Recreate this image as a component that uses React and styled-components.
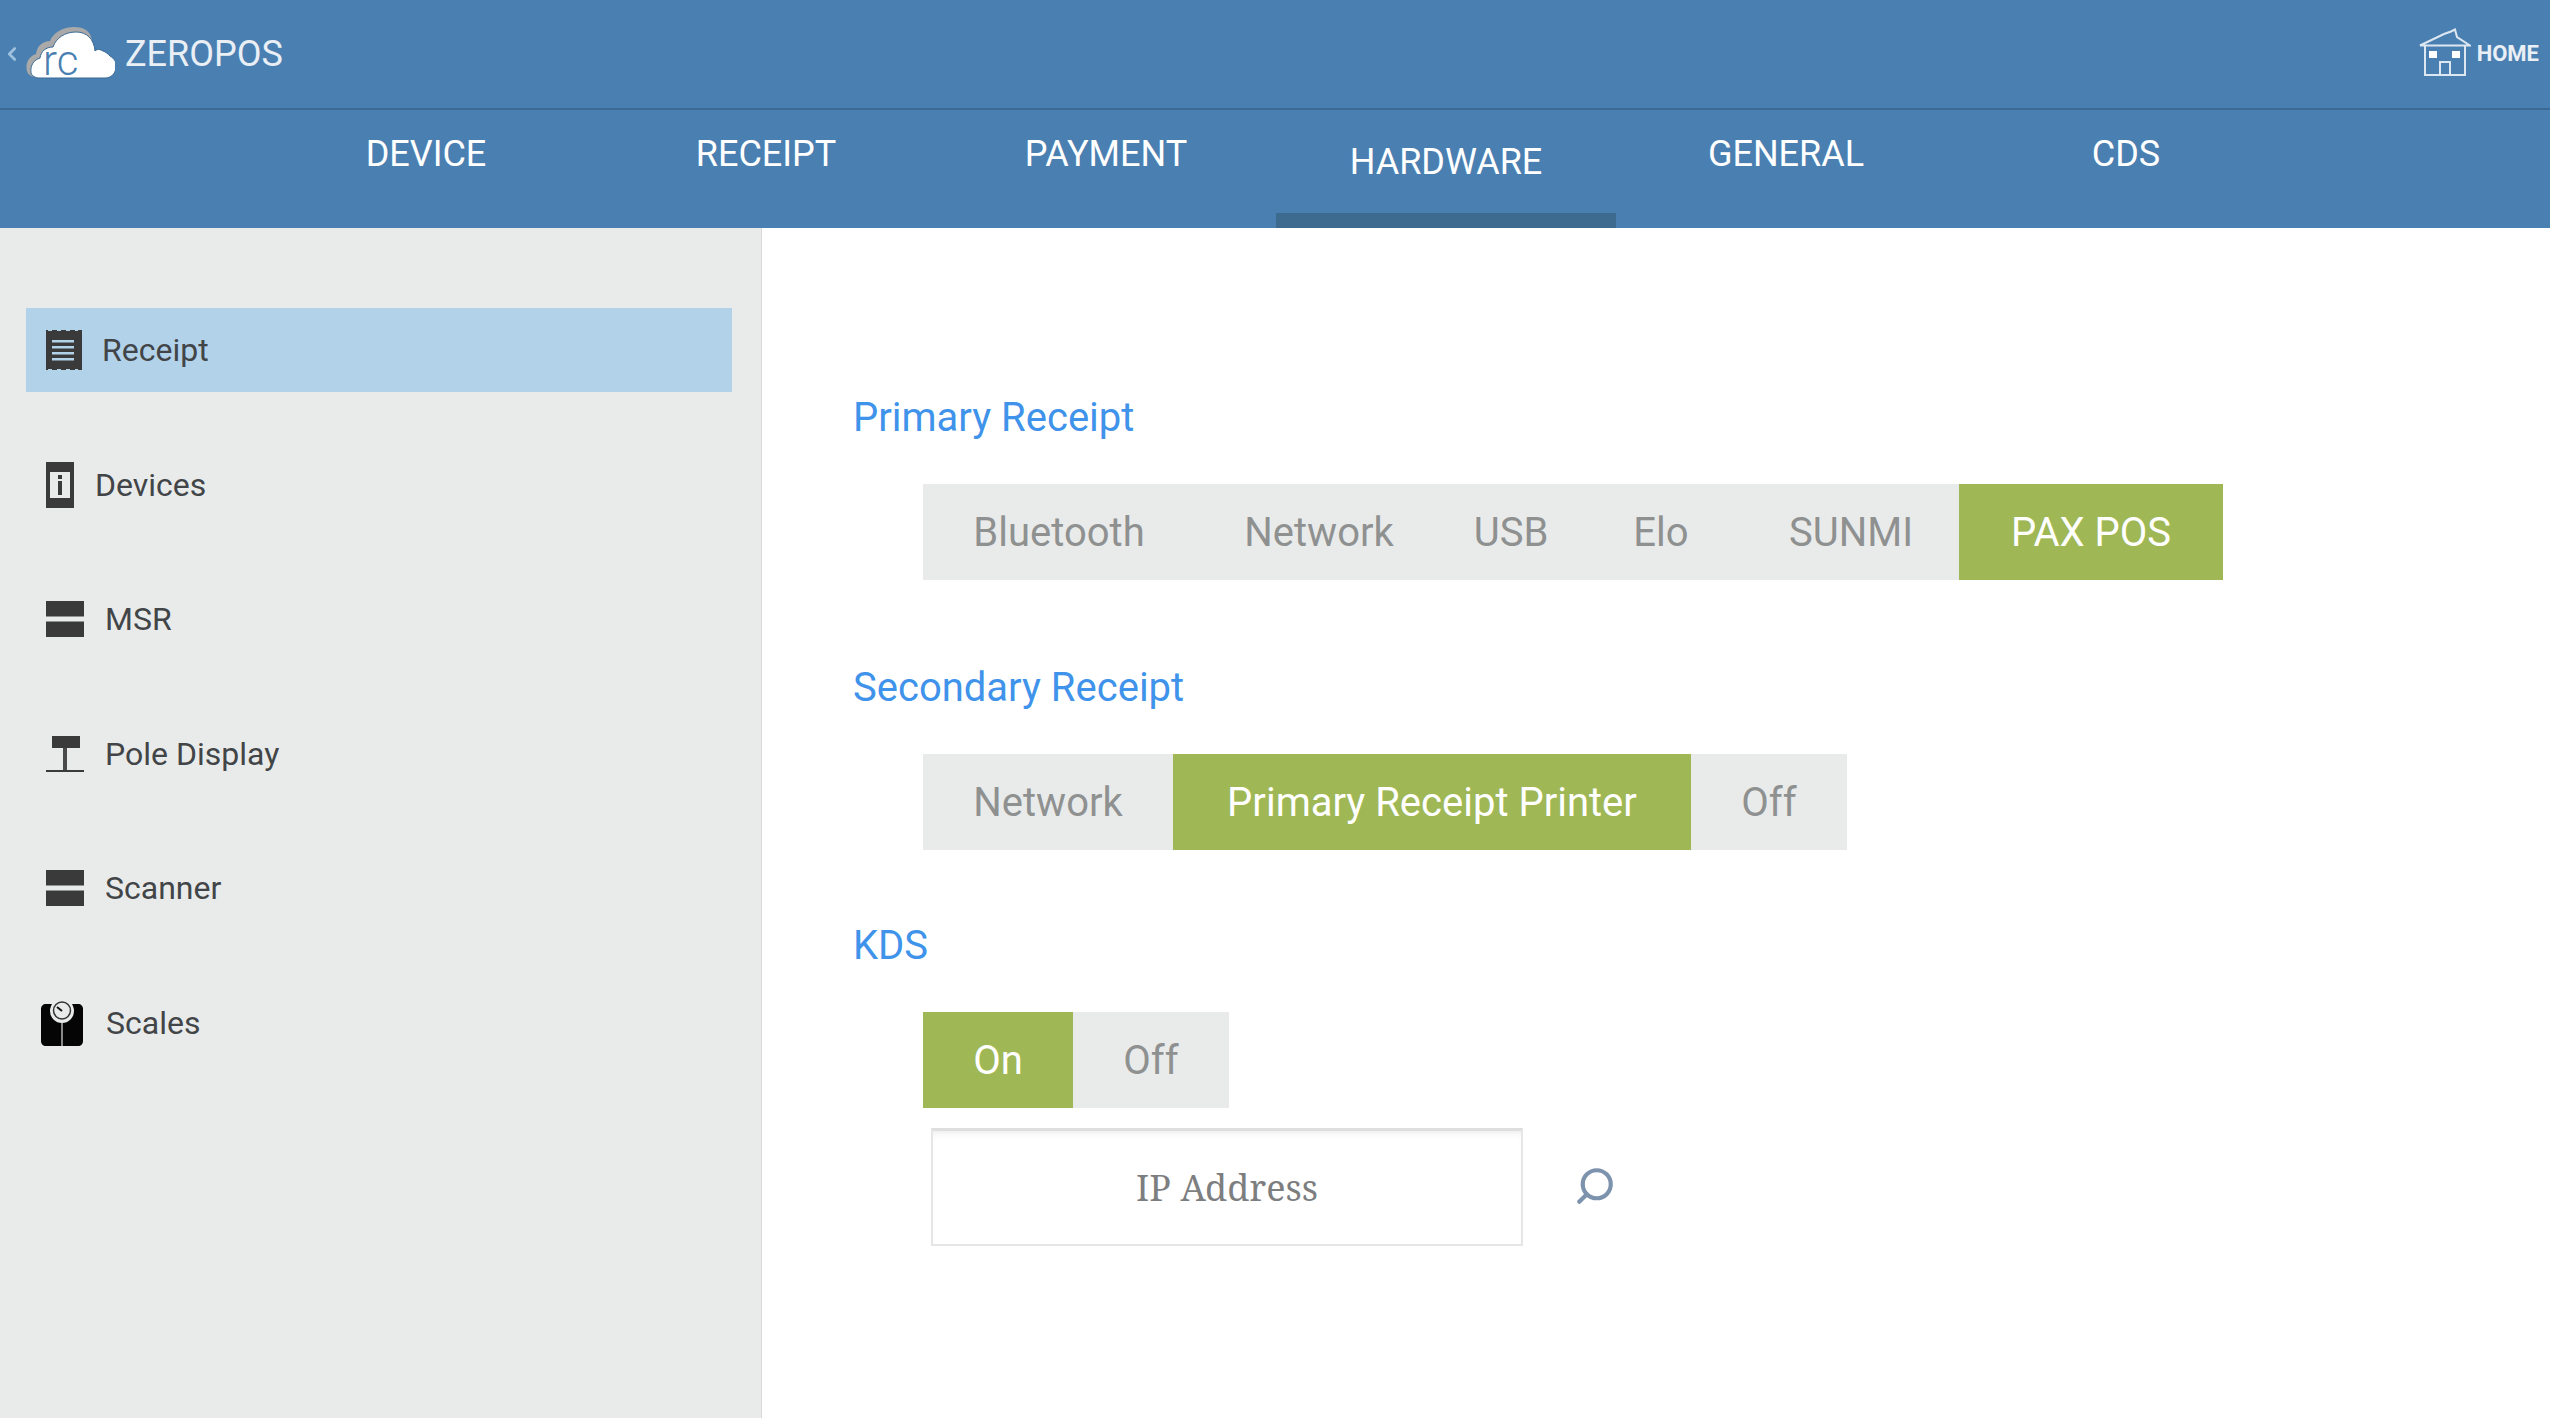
import React from 'react';
import styled, { createGlobalStyle } from 'styled-components';
import { Search, ChevronLeft } from 'lucide-react';

const GlobalStyle = createGlobalStyle`
  html, body {
    margin: 0;
    padding: 0;
    background: #fff;
    font-family: Roboto, "Liberation Sans", sans-serif;
  }
`;

const Page = styled.div`
  width: 2550px;
  height: 1418px;
  display: flex;
  flex-direction: column;
  overflow: hidden;
`;

const TopBar = styled.header`
  height: 108px;
  flex: none;
  display: flex;
  align-items: center;
  justify-content: space-between;
  background: #4a7fb1;
  border-bottom: 2px solid #3a6a95;
  box-sizing: content-box;
`;

const Brand = styled.div`
  display: flex;
  align-items: center;
  color: #e9eff5;
  font-size: 36px;
  padding-top: 0;
`;

const BackIcon = styled(ChevronLeft)`
  width: 22px;
  height: 34px;
  color: #9dc1de;
  margin-left: 1px;
  margin-right: 0;
`;

const BrandName = styled.span`
  margin-left: 10px;
`;

const HomeLink = styled.div`
  display: flex;
  align-items: center;
  gap: 6px;
  color: #e9eff5;
  font-size: 22px;
  font-weight: 700;
  padding-right: 11px;
  margin-top: -2px;
`;

const TabBar = styled.nav`
  height: 118px;
  flex: none;
  display: flex;
  padding-left: 256px;
  background: #4a7fb1;
`;

const Tab = styled.div`
  width: 340px;
  height: 118px;
  box-sizing: border-box;
  display: flex;
  align-items: center;
  justify-content: center;
  padding-top: 0;
  color: #fff;
  font-size: 36px;
  border-bottom: 15px solid ${p => (p.$active ? '#3d6b90' : 'transparent')};
  padding-bottom: ${p => (p.$active ? '0' : '15px')};
`;

const Body = styled.div`
  flex: 1;
  display: flex;
  min-height: 0;
`;

const Sidebar = styled.aside`
  width: 762px;
  flex: none;
  box-sizing: border-box;
  padding: 80px 0 0 26px;
  background: #e9ebeb;
  border-right: 1px solid #d8dada;
  display: flex;
  flex-direction: column;
  gap: 50.6px;
`;

const SideItem = styled.div`
  width: 706px;
  height: 84px;
  display: flex;
  align-items: center;
  color: #424547;
  font-size: 32px;
  background: ${p => (p.$active ? '#b2d2ea' : 'transparent')};
`;

const SideIcon = styled.svg`
  flex: none;
  display: block;
  margin-left: ${p => p.$left}px;
  margin-right: ${p => p.$right}px;
`;

const Main = styled.main`
  flex: 1;
  box-sizing: border-box;
  padding: 162px 0 0 91px;
`;

const SectionTitle = styled.h2`
  margin: 0;
  height: 56px;
  line-height: 56px;
  color: #3f93ea;
  font-size: 40px;
  font-weight: 400;
`;

const Segments = styled.div`
  display: flex;
  width: fit-content;
  margin: ${p => p.$top}px 0 ${p => p.$bottom}px 70px;
  background: #e9ebeb;
`;

const Segment = styled.div`
  height: 96px;
  display: flex;
  align-items: center;
  justify-content: center;
  box-sizing: border-box;
  width: ${p => p.$width}px;
  font-size: 40px;
  color: ${p => (p.$on ? '#fff' : '#8f9191')};
  background: ${p => (p.$on ? '#9fb855' : 'transparent')};
`;

const AddressRow = styled.div`
  display: flex;
  align-items: center;
  margin: 20px 0 0 78px;
`;

const AddressInput = styled.div`
  width: 592px;
  height: 118px;
  box-sizing: border-box;
  display: flex;
  align-items: center;
  justify-content: center;
  padding-top: 0;
  border: 2px solid #e6e6e6;
  border-top: 3px solid #dedede;
  box-shadow: inset 0 6px 8px -6px rgba(0, 0, 0, 0.12);
  color: #7c7e80;
  font-family: "Noto Serif", "DejaVu Serif", "Liberation Serif", serif;
  font-size: 36px;
`;

const SearchIcon = styled(Search)`
  width: 42px;
  height: 42px;
  margin-left: 51px;
  margin-top: -3px;
  color: #7d92ad;
  transform: scaleX(-1);
`;

const CloudLogo = () => (
  <svg width="92" height="62" viewBox="0 0 92 62">
    <path d="M4 48c-2-8 2-15 9-17 1-8 7-13 14-13 3-8 13-14 24-14 10 0 17 4 18 14l-8 36H14C9 54 5 52 4 48z" fill="#a9a9a9" />
    <path d="M8 50c-1-8 3-13 9-15 1-7 6-11 13-11 3-9 12-15 23-15 11 0 18 7 19 19 2-2 5-2 8 0 3 1 5 3 7 5 5 3 7 7 6 12-1 6-5 10-11 10H17c-5 0-8-2-9-5z" fill="#fff" stroke="#3a6a95" strokeWidth="1" />
    <text x="20" y="52" fontFamily="Roboto, sans-serif" fontSize="42" fontWeight="300" fill="#4a7fb1">rc</text>
  </svg>
);

const HomeIcon = () => (
  <svg width="52" height="50" viewBox="0 0 52 50" fill="none" stroke="#dce7f1" strokeWidth="2">
    <path d="M1 17.5 L25 6 L32 3.5 L36 1.5 L38 9 L51 17.5 Z" />
    <path d="M6 18 V47 H46 V18" />
    <path d="M21 47 V34 H31 V47" />
    <rect x="10" y="23" width="8" height="7" fill="#fff" stroke="none" />
    <rect x="33" y="23" width="8" height="7" fill="#fff" stroke="none" />
  </svg>
);

const ReceiptIcon = () => (
  <SideIcon $left={20} $right={20} width="36" height="40" viewBox="0 0 36 40">
    <path d="M0 0h2v1h4V0h5v1h4V0h5v1h4V0h5v1h3V0h4v40h-4v-1h-3v1h-5v-1h-4v1h-5v-1h-4v1H6v-1H2v1H0z" fill="#3a3a3a" />
    <path d="M6 10h22v2.5H6zM6 16h22v2.5H6zM6 22h22v2.5H6zM6 28h22v2.5H6z" fill="#b2d2ea" />
  </SideIcon>
);

const DeviceIcon = () => (
  <SideIcon $left={20} $right={21} width="28" height="46" viewBox="0 0 28 46">
    <rect width="28" height="46" fill="#3a3a3a" />
    <rect x="4" y="10" width="20" height="26" fill="#e9ebeb" />
    <rect x="12" y="13" width="4" height="4" fill="#3a3a3a" />
    <rect x="12" y="19" width="4" height="14" fill="#3a3a3a" />
  </SideIcon>
);

const BarsIcon = () => (
  <SideIcon $left={20} $right={21} width="38" height="36" viewBox="0 0 38 36">
    <rect width="38" height="15.5" fill="#3a3a3a" />
    <rect y="20.5" width="38" height="15.5" fill="#3a3a3a" />
  </SideIcon>
);

const PoleIcon = () => (
  <SideIcon $left={20} $right={21} width="38" height="36" viewBox="0 0 38 36">
    <rect x="6" width="28" height="12" fill="#3a3a3a" />
    <rect x="17" y="12" width="4" height="22" fill="#4a4a4a" />
    <rect y="34" width="38" height="2" fill="#3a3a3a" />
  </SideIcon>
);

const ScaleIcon = () => (
  <SideIcon $left={14} $right={22} width="44" height="48" viewBox="0 0 44 48">
    <path d="M6 5h32c3 0 5 2 5 5v32c0 3-2 5-5 5H6c-3 0-5-2-5-5V10c0-3 2-5 5-5z" fill="#050505" />
    <circle cx="22" cy="12" r="12" fill="#e9ebeb" />
    <circle cx="22" cy="11.5" r="8.5" fill="none" stroke="#333" strokeWidth="1.5" />
    <path d="M17 8l5 4" stroke="#111" strokeWidth="2" />
    <rect x="21" y="24" width="2" height="23" fill="#888" />
  </SideIcon>
);

const tabs = ['DEVICE', 'RECEIPT', 'PAYMENT', 'HARDWARE', 'GENERAL', 'CDS'];

const sideItems = [
  { label: 'Receipt', icon: <ReceiptIcon />, active: true },
  { label: 'Devices', icon: <DeviceIcon /> },
  { label: 'MSR', icon: <BarsIcon /> },
  { label: 'Pole Display', icon: <PoleIcon /> },
  { label: 'Scanner', icon: <BarsIcon /> },
  { label: 'Scales', icon: <ScaleIcon /> },
];

const App = () => (
  <Page>
    <GlobalStyle />
    <TopBar>
      <Brand>
        <BackIcon strokeWidth={3} />
        <CloudLogo />
        <BrandName>ZEROPOS</BrandName>
      </Brand>
      <HomeLink>
        <HomeIcon />
        HOME
      </HomeLink>
    </TopBar>
    <TabBar>
      {tabs.map(t => (
        <Tab key={t} $active={t === 'HARDWARE'}>{t}</Tab>
      ))}
    </TabBar>
    <Body>
      <Sidebar>
        {sideItems.map(item => (
          <SideItem key={item.label} $active={item.active}>
            {item.icon}
            {item.label}
          </SideItem>
        ))}
      </Sidebar>
      <Main>
        <SectionTitle>Primary Receipt</SectionTitle>
        <Segments $top={38} $bottom={80}>
          <Segment $width={272}>Bluetooth</Segment>
          <Segment $width={248}>Network</Segment>
          <Segment $width={136}>USB</Segment>
          <Segment $width={164}>Elo</Segment>
          <Segment $width={216}>SUNMI</Segment>
          <Segment $width={264} $on>PAX POS</Segment>
        </Segments>
        <SectionTitle>Secondary Receipt</SectionTitle>
        <Segments $top={38} $bottom={68}>
          <Segment $width={250}>Network</Segment>
          <Segment $width={518} $on>Primary Receipt Printer</Segment>
          <Segment $width={156}>Off</Segment>
        </Segments>
        <SectionTitle>KDS</SectionTitle>
        <Segments $top={38} $bottom={0}>
          <Segment $width={150} $on>On</Segment>
          <Segment $width={156}>Off</Segment>
        </Segments>
        <AddressRow>
          <AddressInput>IP Address</AddressInput>
          <SearchIcon strokeWidth={2.4} />
        </AddressRow>
      </Main>
    </Body>
  </Page>
);

export default App;
